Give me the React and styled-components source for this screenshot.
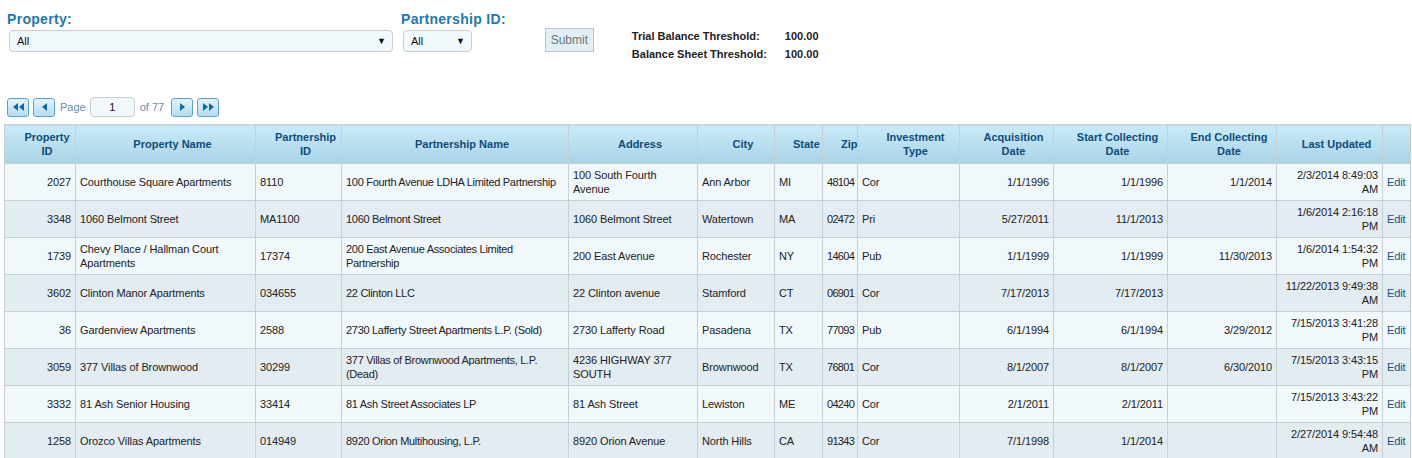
import React from 'react'
import styled, { createGlobalStyle } from 'styled-components'

const GlobalStyle = createGlobalStyle`
  body {
    margin: 0;
    background: #fff;
    font-family: Tahoma, 'Liberation Sans', Arial, sans-serif;
    font-size: 11px;
    color: #333;
  }
`

const Page = styled.div`
  padding: 10px 2px 0 4px;
`

const Filters = styled.div`
  display: flex;
  align-items: flex-start;
  height: 87px;
`

const Field = styled.div`
  display: flex;
  flex-direction: column;
  margin-left: ${p => p.$ml || 0}px;
`

const Label = styled.label`
  font-family: 'Liberation Sans', Arial, sans-serif;
  font-size: 14px;
  font-weight: bold;
  color: #1b7ab3;
  letter-spacing: 0.3px;
  margin-left: 3px;
  line-height: 18px;
`

const Select = styled.div`
  box-sizing: border-box;
  width: ${p => p.$w}px;
  height: 22px;
  margin-top: 2px;
  margin-left: ${p => p.$ml || 0}px;
  border: 1px solid #c9cdd0;
  border-radius: 4px;
  background: #f2f9fc;
  display: flex;
  align-items: center;
  justify-content: space-between;
  padding: 0 6px 0 7px;
  font-size: 11px;
  color: #111;
`

const Arrow = styled.span`
  font-size: 9px;
  color: #111;
`

const SubmitButton = styled.button`
  margin-left: 39px;
  margin-top: 18px;
  width: 49px;
  height: 24px;
  border: 1px solid #b5c6cf;
  background: #e1eff5;
  color: #6e7376;
  font-family: 'Liberation Sans', Arial, sans-serif;
  font-size: 12px;
  padding: 0;
`

const Thresholds = styled.div`
  margin-left: 38px;
  margin-top: 19px;
  display: grid;
  grid-template-columns: 153px auto;
  row-gap: 4px;
  font-family: 'Liberation Sans', Arial, sans-serif;
  font-size: 11px;
  font-weight: bold;
  color: #222;
  line-height: 14px;
`

const Pager = styled.div`
  display: flex;
  align-items: center;
  gap: 4px;
  margin-left: 3px;
  height: 20px;
  margin-bottom: 7px;
`

const PagerButton = styled.button`
  box-sizing: border-box;
  width: 22px;
  height: 19px;
  padding: 0;
  border: 1px solid #5aa2cf;
  border-radius: 3px;
  background: linear-gradient(#e2f4fd, #b5dcf1);
  display: flex;
  align-items: center;
  justify-content: center;
`

const PagerText = styled.span`
  color: #5f8fae;
  font-size: 11px;
  margin: 0 ${p => p.$mr || 0}px 0 1px;
`

const PageInput = styled.div`
  box-sizing: border-box;
  width: 45px;
  height: 20px;
  border: 1px solid #c9cdd0;
  border-radius: 4px;
  background: #f2f9fc;
  text-align: center;
  line-height: 18px;
  color: #111;
`

const Table = styled.table`
  border-collapse: collapse;
  table-layout: fixed;
  width: 1406px;
  font-family: 'Liberation Sans', Arial, sans-serif;
  font-size: 11px;
`

const Th = styled.th`
  height: 39px;
  box-sizing: border-box;
  padding: 2px 4px 2px 18px;
  background: linear-gradient(#c9eaf9, #a9d3e6);
  color: #0d4c7c;
  font-weight: bold;
  line-height: 14px;
  text-align: center;
  border: 1px solid #c4d0d5;
  border-top-color: #cdd3d6;
`

const Tr = styled.tr`
  background: ${p => (p.$alt ? '#e3ecf1' : '#f1f8fb')};
`

const Td = styled.td`
  height: 37px;
  box-sizing: border-box;
  padding: 1px 4px;
  line-height: 14px;
  letter-spacing: ${p => p.$ls || '-0.1px'};
  border: 1px solid #c4d0d5;
  color: #222;
  text-align: ${p => (p.$right ? 'right' : 'left')};
  vertical-align: middle;
`

const EditLink = styled.a`
  color: #16507f;
  text-decoration: none;
`

const Tri = ({ dir = 'right', double }) => {
  const one = dir === 'right' ? 'M0 0 L5 4 L0 8 Z' : 'M5 0 L0 4 L5 8 Z'
  return (
    <svg width={double ? 11 : 5} height="8" viewBox={`0 0 ${double ? 11 : 5} 8`}>
      <path d={one} fill="#1565a0" />
      {double && <path d={one} transform="translate(6 0)" fill="#1565a0" />}
    </svg>
  )
}

const columns = [
  { w: 71, title: 'Property ID', key: 'pid', right: true },
  { w: 180, title: 'Property Name', key: 'pname' },
  { w: 86, title: 'Partnership ID', key: 'ptid' },
  { w: 227, title: 'Partnership Name', key: 'ptname', ls: '-0.3px' },
  { w: 129, title: 'Address', key: 'addr' },
  { w: 77, title: 'City', key: 'city' },
  { w: 48, title: 'State', key: 'state' },
  { w: 35, title: 'Zip', key: 'zip', ls: '-0.7px' },
  { w: 102, title: 'Investment Type', key: 'type' },
  { w: 94, title: 'Acquisition Date', key: 'acq', right: true },
  { w: 114, title: 'Start Collecting Date', key: 'start', right: true },
  { w: 109, title: 'End Collecting Date', key: 'end', right: true },
  { w: 106, title: 'Last Updated', key: 'upd', right: true },
  { w: 28, title: '', key: 'edit' },
]

const rows = [
  { pid: '2027', pname: 'Courthouse Square Apartments', ptid: '8110', ptname: '100 Fourth Avenue LDHA Limited Partnership', addr: '100 South Fourth Avenue', city: 'Ann Arbor', state: 'MI', zip: '48104', type: 'Cor', acq: '1/1/1996', start: '1/1/1996', end: '1/1/2014', upd: '2/3/2014 8:49:03 AM' },
  { pid: '3348', pname: '1060 Belmont Street', ptid: 'MA1100', ptname: '1060 Belmont Street', addr: '1060 Belmont Street', city: 'Watertown', state: 'MA', zip: '02472', type: 'Pri', acq: '5/27/2011', start: '11/1/2013', end: '', upd: '1/6/2014 2:16:18 PM' },
  { pid: '1739', pname: 'Chevy Place / Hallman Court Apartments', ptid: '17374', ptname: '200 East Avenue Associates Limited Partnership', addr: '200 East Avenue', city: 'Rochester', state: 'NY', zip: '14604', type: 'Pub', acq: '1/1/1999', start: '1/1/1999', end: '11/30/2013', upd: '1/6/2014 1:54:32 PM' },
  { pid: '3602', pname: 'Clinton Manor Apartments', ptid: '034655', ptname: '22 Clinton LLC', addr: '22 Clinton avenue', city: 'Stamford', state: 'CT', zip: '06901', type: 'Cor', acq: '7/17/2013', start: '7/17/2013', end: '', upd: '11/22/2013 9:49:38 AM' },
  { pid: '36', pname: 'Gardenview Apartments', ptid: '2588', ptname: '2730 Lafferty Street Apartments L.P. (Sold)', addr: '2730 Lafferty Road', city: 'Pasadena', state: 'TX', zip: '77093', type: 'Pub', acq: '6/1/1994', start: '6/1/1994', end: '3/29/2012', upd: '7/15/2013 3:41:28 PM' },
  { pid: '3059', pname: '377 Villas of Brownwood', ptid: '30299', ptname: '377 Villas of Brownwood Apartments, L.P. (Dead)', addr: '4236 HIGHWAY 377 SOUTH', city: 'Brownwood', state: 'TX', zip: '76801', type: 'Cor', acq: '8/1/2007', start: '8/1/2007', end: '6/30/2010', upd: '7/15/2013 3:43:15 PM' },
  { pid: '3332', pname: '81 Ash Senior Housing', ptid: '33414', ptname: '81 Ash Street Associates LP', addr: '81 Ash Street', city: 'Lewiston', state: 'ME', zip: '04240', type: 'Cor', acq: '2/1/2011', start: '2/1/2011', end: '', upd: '7/15/2013 3:43:22 PM' },
  { pid: '1258', pname: 'Orozco Villas Apartments', ptid: '014949', ptname: '8920 Orion Multihousing, L.P.', addr: '8920 Orion Avenue', city: 'North Hills', state: 'CA', zip: '91343', type: 'Cor', acq: '7/1/1998', start: '1/1/2014', end: '', upd: '2/27/2014 9:54:48 AM' },
]

const App = () => {
  return (
    <Page>
      <GlobalStyle />
      <Filters>
        <Field>
          <Label>Property:</Label>
          <Select $w={384} $ml={5}>
            All <Arrow>▼</Arrow>
          </Select>
        </Field>
        <Field $ml={5}>
          <Label>Partnership ID:</Label>
          <Select $w={69} $ml={5}>
            All <Arrow>▼</Arrow>
          </Select>
        </Field>
        <SubmitButton>Submit</SubmitButton>
        <Thresholds>
          <span>Trial Balance Threshold:</span>
          <span>100.00</span>
          <span>Balance Sheet Threshold:</span>
          <span>100.00</span>
        </Thresholds>
      </Filters>
      <Pager>
        <PagerButton><Tri dir="left" double /></PagerButton>
        <PagerButton><Tri dir="left" /></PagerButton>
        <PagerText>Page</PagerText>
        <PageInput>1</PageInput>
        <PagerText $mr={3}>of 77</PagerText>
        <PagerButton><Tri dir="right" /></PagerButton>
        <PagerButton><Tri dir="right" double /></PagerButton>
      </Pager>
      <Table>
        <colgroup>
          {columns.map(c => (
            <col key={c.key} style={{ width: c.w }} />
          ))}
        </colgroup>
        <thead>
          <tr>
            {columns.map(c => (
              <Th key={c.key}>{c.title}</Th>
            ))}
          </tr>
        </thead>
        <tbody>
          {rows.map((r, i) => (
            <Tr key={r.pid} $alt={i % 2 === 1}>
              {columns.map(c =>
                c.key === 'edit' ? (
                  <Td key={c.key}><EditLink href="#">Edit</EditLink></Td>
                ) : (
                  <Td key={c.key} $right={c.right} $ls={c.ls}>{r[c.key]}</Td>
                )
              )}
            </Tr>
          ))}
        </tbody>
      </Table>
    </Page>
  )
}

export default App
